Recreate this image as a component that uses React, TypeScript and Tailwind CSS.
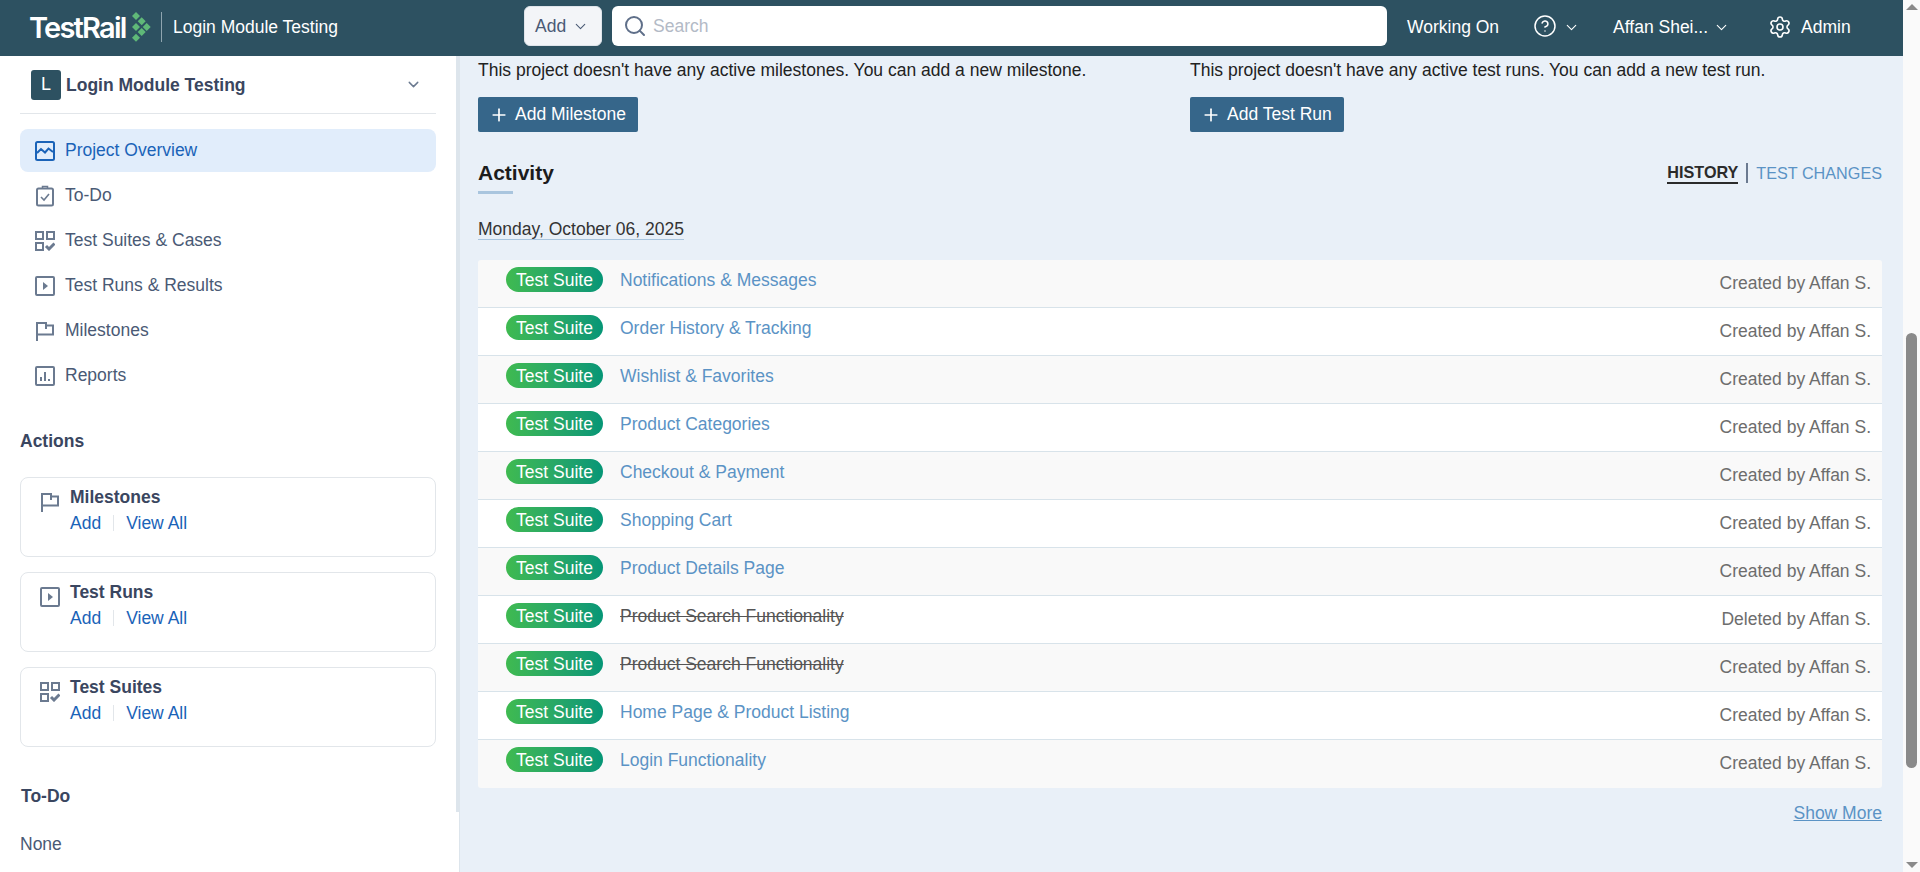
import { ChevronDown, CircleHelp, Plus, Search, Settings } from 'lucide-react'

const rows = [
  { name: 'Notifications & Messages', by: 'Created by Affan S.' },
  { name: 'Order History & Tracking', by: 'Created by Affan S.' },
  { name: 'Wishlist & Favorites', by: 'Created by Affan S.' },
  { name: 'Product Categories', by: 'Created by Affan S.' },
  { name: 'Checkout & Payment', by: 'Created by Affan S.' },
  { name: 'Shopping Cart', by: 'Created by Affan S.' },
  { name: 'Product Details Page', by: 'Created by Affan S.' },
  { name: 'Product Search Functionality', by: 'Deleted by Affan S.', struck: true },
  { name: 'Product Search Functionality', by: 'Created by Affan S.', struck: true },
  { name: 'Home Page & Product Listing', by: 'Created by Affan S.' },
  { name: 'Login Functionality', by: 'Created by Affan S.' },
]

function OverviewIcon() {
  return (
    <svg width="20" height="20" viewBox="0 0 20 20" fill="none" stroke="#1a63b8" strokeWidth="2">
      <rect x="1" y="1" width="18" height="18" rx="1.5" />
      <path d="M2 12l4-4 4 3.500 3.500-4L18 11" />
    </svg>
  )
}

function TodoIcon() {
  return (
    <svg width="20" height="22" viewBox="0 0 20 22" fill="none" stroke="#6b7a90" strokeWidth="2">
      <rect x="2" y="3.500" width="16" height="17" rx="1.500" />
      <path d="M7.500 3.500V1.500h5v2" strokeWidth="1.500" />
      <path d="M6 12l3 3 5-6" strokeWidth="1.600" />
    </svg>
  )
}

function SuitesIcon() {
  return (
    <svg width="20" height="20" viewBox="0 0 20 20" fill="none" stroke="#6b7a90" strokeWidth="2">
      <rect x="1" y="1" width="7" height="7" />
      <rect x="12" y="1" width="7" height="7" />
      <rect x="1" y="12" width="7" height="7" />
      <path d="M11 15l3 3 5.500-5.500" strokeWidth="3" />
    </svg>
  )
}

function RunsIcon() {
  return (
    <svg width="20" height="20" viewBox="0 0 20 20" fill="none" stroke="#6b7a90" strokeWidth="2">
      <rect x="1" y="1" width="18" height="18" rx="1" />
      <path d="M8 6l5 4-5 4z" fill="#6b7a90" stroke="none" />
    </svg>
  )
}

function FlagIcon() {
  return (
    <svg width="20" height="20" viewBox="0 0 20 20" fill="none" stroke="#6b7a90" strokeWidth="2">
      <path d="M2 20V2h9v6" />
      <path d="M11 4.500h7v9H2" />
    </svg>
  )
}

function ReportsIcon() {
  return (
    <svg width="20" height="20" viewBox="0 0 20 20" fill="none" stroke="#6b7a90" strokeWidth="2">
      <rect x="1" y="1" width="18" height="18" rx="1" />
      <path d="M6 15v-4M10 15V6M14 15v-2" />
    </svg>
  )
}

function LogoMark() {
  return (
    <svg width="19" height="30" viewBox="0 0 19 30" fill="#5fb878">
      <path d="M4 0l4 4-4 4-4-4z" />
      <path d="M9.700 5.300l4 4-4 4-4-4z" />
      <path d="M4 11l4 4-4 4-4-4z" />
      <path d="M14.700 11l4 4-4 4-4-4z" />
      <path d="M9.700 16l4 4-4 4-4-4z" />
      <path d="M4 21.700l4 4-4 4-4-4z" />
    </svg>
  )
}

function NavItem({ icon, label, active }: { icon: React.ReactNode; label: string; active?: boolean }) {
  return (
    <div
      className={`flex items-center h-[43px] mb-[2px] pl-[15px] rounded-lg ${
        active ? 'bg-[#e1edfb] text-[#1a63b8]' : 'text-[#4a5a75]'
      }`}
    >
      <span className="w-[30px] shrink-0">{icon}</span>
      <span className="text-[17.500px]">{label}</span>
    </div>
  )
}

function ActionCard({ icon, label }: { icon: React.ReactNode; label: string }) {
  return (
    <div className="flex h-[80px] border border-[#e2e6ea] rounded-lg pl-[19px] pt-[8px] mb-[15px]">
      <span className="w-[30px] pt-[6px] shrink-0">{icon}</span>
      <div>
        <div className="text-[17.500px] font-bold text-[#3a4660] leading-[22px]">{label}</div>
        <div className="flex items-center text-[17.500px] text-[#1a63b8] leading-[20px] mt-[5px]">
          <span>Add</span>
          <span className="w-px h-[16px] bg-[#e2e6ea] mx-[12px]" />
          <span>View All</span>
        </div>
      </div>
    </div>
  )
}

function Sidebar() {
  return (
    <aside className="w-[460px] shrink-0 h-[816px] bg-white flex border-r border-[#dde5ec]">
      <div className="w-[456px] shrink-0 px-5">
        <div className="flex items-center h-[58px] border-b border-[#e2e6ea] pl-[11px]">
          <span className="w-[30px] h-[30px] bg-[#2d5161] rounded-[3px] flex items-center justify-center text-white text-[18px]">L</span>
          <span className="ml-[5px] mt-[1px] text-[17.500px] font-bold text-[#3a4660]">Login Module Testing</span>
          <ChevronDown size={17} strokeWidth={2} className="ml-auto mr-[14px] text-[#6b7a90]" />
        </div>
        <nav className="mt-[15px]">
          <NavItem icon={<OverviewIcon />} label="Project Overview" active />
          <NavItem icon={<TodoIcon />} label="To-Do" />
          <NavItem icon={<SuitesIcon />} label="Test Suites & Cases" />
          <NavItem icon={<RunsIcon />} label="Test Runs & Results" />
          <NavItem icon={<FlagIcon />} label="Milestones" />
          <NavItem icon={<ReportsIcon />} label="Reports" />
        </nav>
        <h3 className="mt-[33px] text-[17.500px] leading-[22px] font-bold text-[#3a4660]">Actions</h3>
        <div className="mt-[25px]">
          <ActionCard icon={<FlagIcon />} label="Milestones" />
          <ActionCard icon={<RunsIcon />} label="Test Runs" />
          <ActionCard icon={<SuitesIcon />} label="Test Suites" />
        </div>
        <h3 className="mt-[38px] ml-px text-[17.500px] leading-[22px] font-bold text-[#3a4660]">To-Do</h3>
        <p className="mt-[26px] text-[17.500px] leading-[22px] text-[#4a5a75]">None</p>
      </div>
      <div className="w-[3px] h-[756px] bg-[#dde5ec]" />
    </aside>
  )
}

function ActivityRow({ name, by, struck, odd }: { name: string; by: string; struck?: boolean; odd: boolean }) {
  return (
    <div className={`flex h-[48px] pl-[28px] pr-[11px] border-b border-[#d8e3ea] last:border-b-0 ${odd ? 'bg-[#f9f9f9]' : 'bg-white'}`}>
      <span className="mt-[7px] w-[97px] h-[25px] rounded-full bg-gradient-to-r from-[#3fba50] to-[#059676] text-white text-[17.500px] leading-[26px] text-center">
        Test Suite
      </span>
      <span className={`ml-[17px] mt-[8px] text-[17.500px] leading-[24px] ${struck ? 'line-through text-[#555]' : 'text-[#5b93c5]'}`}>{name}</span>
      <span className="ml-auto mt-[11px] text-[17.500px] leading-[24px] text-[#6d6d6d]">{by}</span>
    </div>
  )
}

export default function App() {
  return (
    <div className="flex h-[872px] overflow-hidden bg-[#fafafa] font-['Liberation_Sans',Arial,sans-serif]">
      <div className="w-[1903px] shrink-0 flex flex-col">
        <header className="h-[56px] shrink-0 bg-[#2d5161] flex items-center pb-[2px] text-white">
          <div className="w-[524px] shrink-0 flex items-center pl-[29px]">
            <div className="w-[132px] flex items-center">
              <span className="w-[103px] font-['Inter',sans-serif] text-[29px] font-semibold tracking-[-1.800px] leading-none">TestRail</span>
              <LogoMark />
            </div>
            <span className="w-px h-[30px] bg-[#8fa5af]" />
            <span className="ml-[11px] text-[17.500px]">Login Module Testing</span>
          </div>
          <button className="w-[78px] h-[40px] mb-[2px] rounded-md bg-[#f3f5f8] border border-[#dfe4ea] flex items-center pl-[10px] text-[#4a5a75] text-[17.500px]">
            Add
            <ChevronDown size={17} strokeWidth={1.500} className="ml-[6px]" />
          </button>
          <div className="ml-[10px] w-[775px] h-[40px] mb-[2px] rounded-md bg-white flex items-center pl-[11px]">
            <Search size={24} strokeWidth={2} className="text-[#5f6f89]" />
            <span className="ml-[6px] text-[17.500px] text-[#b3bac6]">Search</span>
          </div>
          <span className="ml-[20px] text-[17.500px]">Working On</span>
          <CircleHelp size={24} strokeWidth={1.500} className="ml-[34px] mb-[2px]" />
          <ChevronDown size={17} strokeWidth={1.500} className="ml-[6px]" />
          <span className="ml-[33px] text-[17.500px]">Affan Shei...</span>
          <ChevronDown size={17} strokeWidth={1.500} className="ml-[5px]" />
          <Settings size={24} strokeWidth={1.600} className="ml-[38px]" />
          <span className="ml-[9px] text-[17.500px]">Admin</span>
        </header>
        <div className="flex flex-1 min-h-0 bg-[#e9f0f8]">
          <Sidebar />
          <main className="flex-1 min-w-0 pl-[18px] pr-[21px] pt-[2px]">
            <div className="flex">
              <div className="w-[712px] shrink-0">
                <p className="text-[17.500px] leading-[24px] text-[#222]">This project doesn't have any active milestones. You can add a new milestone.</p>
                <button className="mt-[15px] flex items-center h-[35px] w-[160px] pl-[12px] bg-[#36668a] rounded-[2px] text-white text-[17.500px]">
                  <Plus size={20} strokeWidth={2} className="-ml-[1px] mr-[6px]" />
                  Add Milestone
                </button>
              </div>
              <div className="flex-1">
                <p className="text-[17.500px] leading-[24px] text-[#222]">This project doesn't have any active test runs. You can add a new test run.</p>
                <button className="mt-[15px] flex items-center h-[35px] w-[154px] pl-[12px] bg-[#36668a] rounded-[2px] text-white text-[17.500px]">
                  <Plus size={20} strokeWidth={2} className="-ml-[1px] mr-[6px]" />
                  Add Test Run
                </button>
              </div>
            </div>
            <div className="mt-[26px] flex items-start justify-between">
              <div>
                <h2 className="pt-[1px] text-[21px] font-bold leading-[28px] text-[#1c1c1c]">Activity</h2>
                <div className="w-[35px] h-[3px] mt-[4px] bg-[#a9c5de]" />
              </div>
              <div className="flex items-center text-[16.200px] leading-[20px] mt-[4px]">
                <span className="font-bold text-[#2b2b2b] border-b-2 border-[#2b2b2b]">HISTORY</span>
                <span className="w-[2px] h-[20px] bg-[#6b7a90] mx-[8px]" />
                <span className="text-[#5b93c5]">TEST CHANGES</span>
              </div>
            </div>
            <div className="mt-[24px] flex">
              <span className="pt-[1px] text-[17.500px] leading-[20px] text-[#333] border-b border-[#a9c5de]">Monday, October 06, 2025</span>
            </div>
            <div className="mt-[20px] rounded-[3px] overflow-hidden">
              {rows.map((row, i) => (
                <ActivityRow key={i} {...row} odd={i % 2 === 0} />
              ))}
            </div>
            <div className="mt-[13px] text-right text-[17.500px] leading-[24px] text-[#5b93c5] underline">Show More</div>
          </main>
        </div>
      </div>
      <div className="relative w-[17px] shrink-0 bg-[#fafafa]">
        <div className="absolute top-[4px] left-[3px] w-0 h-0 border-x-[6px] border-x-transparent border-b-[6px] border-b-[#8a8a8a]" />
        <div className="absolute top-[333px] left-[3px] w-[11px] h-[435px] rounded-full bg-[#8a8a8a]" />
        <div className="absolute bottom-[4px] left-[3px] w-0 h-0 border-x-[6px] border-x-transparent border-t-[6px] border-t-[#8a8a8a]" />
      </div>
    </div>
  )
}
